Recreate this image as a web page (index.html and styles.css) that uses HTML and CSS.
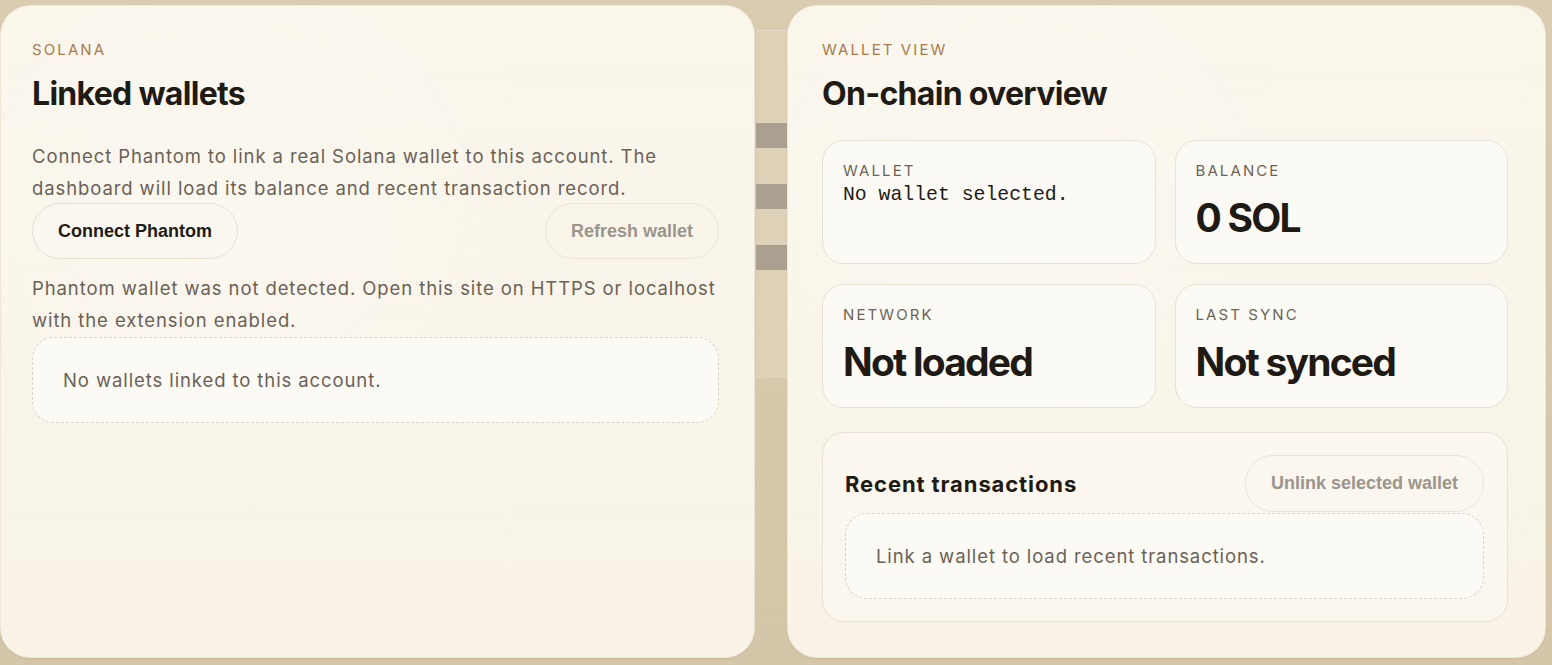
FILE: index.html
```html
<!DOCTYPE html>
<html lang="en">
<head>
  <meta charset="UTF-8" />
  <title>Solana wallets</title>
  <meta name="viewport" content="width=device-width, initial-scale=1.0"/>
  <link rel="stylesheet" href="styles.css">
</head>
<body>

  <!-- page sitting behind the panels -->
  <div class="backdrop">
    <div class="backdrop-bar"></div>
    <div class="backdrop-bar"></div>
    <div class="backdrop-bar"></div>
  </div>

  <main class="board">

    <!-- Left Panel -->
    <section class="panel">
      <p class="eyebrow">Solana</p>
      <h1>Linked wallets</h1>
      <p class="copy">Connect Phantom to link a real Solana wallet to this account. The dashboard will load its balance and recent transaction record.</p>

      <div class="actions">
        <button class="pill">Connect Phantom</button>
        <button class="pill" disabled>Refresh wallet</button>
      </div>

      <p class="copy notice">Phantom wallet was not detected. Open this site on HTTPS or localhost with the extension enabled.</p>

      <div class="empty">No wallets linked to this account.</div>
    </section>

    <!-- Right Panel -->
    <section class="panel panel-right">
      <p class="eyebrow">Wallet view</p>
      <h1>On-chain overview</h1>

      <div class="stats">
        <div class="stat">
          <div class="stat-label">Wallet</div>
          <div class="stat-mono">No wallet selected.</div>
        </div>
        <div class="stat">
          <div class="stat-label">Balance</div>
          <div class="stat-value">0 SOL</div>
        </div>
        <div class="stat">
          <div class="stat-label">Network</div>
          <div class="stat-value">Not loaded</div>
        </div>
        <div class="stat">
          <div class="stat-label">Last sync</div>
          <div class="stat-value">Not synced</div>
        </div>
      </div>

      <div class="tx">
        <div class="tx-head">
          <h2>Recent transactions</h2>
          <button class="pill" disabled>Unlink selected wallet</button>
        </div>
        <div class="empty">Link a wallet to load recent transactions.</div>
      </div>
    </section>

  </main>

</body>
</html>
```

FILE: styles.css
```css
* {
  box-sizing: border-box;
}

body {
  margin: 0;
  height: 665px;
  overflow: hidden;
  font-family: 'Inter', sans-serif;
  background: linear-gradient(to bottom, #d9ccb1, #d4c6a8);
  color: #6b6155;
  position: relative;
}

/* BACKDROP */
.backdrop {
  position: absolute;
  left: 756px;
  top: 30px;
  width: 31px;
  height: 348px;
  background: #ddd1b7;
  border-top: 1px solid #e6dcc7;
  padding-top: 92px;
  display: flex;
  flex-direction: column;
  gap: 36px;
}

.backdrop-bar {
  height: 25px;
  background: #aaa08f;
}

/* LAYOUT */
.board {
  position: relative;
  display: grid;
  grid-template-columns: 755px 759px;
  gap: 32px;
  padding-top: 5px;
}

.panel {
  height: 653px;
  padding: 34px 35px 30px 31px;
  border-radius: 30px;
  background:
    radial-gradient(circle at 30% 35%, rgba(255, 255, 255, 0.3), transparent 45%),
    linear-gradient(to bottom, #faf6ec, #f8f3e6);
  border: 1px solid #efe7d7;
  box-shadow: 0 1px 2px rgba(120, 100, 60, 0.12);
}

.panel-right {
  padding: 34px 37px 30px 34px;
}

.eyebrow {
  margin: 0;
  font-size: 15px;
  line-height: 20px;
  letter-spacing: 2.1px;
  text-transform: uppercase;
  color: #a87a4f;
}

h1 {
  margin: 16px 0 0;
  font-size: 32px;
  line-height: 36px;
  font-weight: 700;
  letter-spacing: -0.7px;
  color: #1f1b14;
}

.copy {
  margin: 28px 0 0;
  font-size: 18.5px;
  line-height: 32px;
  letter-spacing: 0.9px;
}

.notice {
  margin-top: 13px;
}

/* BUTTONS */
.actions {
  display: flex;
  justify-content: space-between;
  margin-top: -1px;
}

.pill {
  height: 56px;
  padding: 0 25px;
  border-radius: 28px;
  border: 1px solid #e7dfd0;
  background: #faf7f0;
  font-family: 'Liberation Sans', Arial, sans-serif;
  font-size: 18px;
  font-weight: 700;
  color: #1f1b14;
  cursor: pointer;
}

.pill:disabled {
  background: transparent;
  border-color: #ece5d6;
  color: #9b958b;
  cursor: default;
}

/* EMPTY STATES */
.empty {
  margin-top: 1px;
  padding: 26px 30px;
  border: 1px dashed #d9d2c5;
  border-radius: 22px;
  background: #fcfaf5;
  font-size: 18.5px;
  line-height: 32px;
  letter-spacing: 0.9px;
}

/* STATS */
.stats {
  display: grid;
  grid-template-columns: 1fr 1fr;
  gap: 20px 19px;
  margin-top: 28px;
}

.stat {
  height: 124px;
  padding: 20px 20px;
  border: 1px solid #e8e1d4;
  border-radius: 22px;
  background: #fcfaf5;
}

.stat-label {
  font-size: 15px;
  line-height: 20px;
  letter-spacing: 2.1px;
  text-transform: uppercase;
  color: #6e6456;
}

.stat-mono {
  margin-top: 3px;
  font-family: 'Liberation Mono', monospace;
  font-size: 19.8px;
  line-height: 22px;
  color: #1f1b14;
}

.stat-value {
  margin-top: 15px;
  font-size: 39px;
  line-height: 44px;
  font-weight: 700;
  letter-spacing: -1.8px;
  color: #1f1b14;
}

/* TRANSACTIONS */
.tx {
  margin-top: 24px;
  padding: 22px 23px 22px 22px;
  border: 1px solid #e8e1d4;
  border-radius: 22px;
  background: #fbf7ef;
}

.tx-head {
  display: flex;
  justify-content: space-between;
  align-items: center;
}

.tx-head h2 {
  margin: 0;
  font-size: 22px;
  font-weight: 700;
  letter-spacing: 0.9px;
  color: #1f1b14;
}

.tx-head .pill {
  height: 57px;
}
```
